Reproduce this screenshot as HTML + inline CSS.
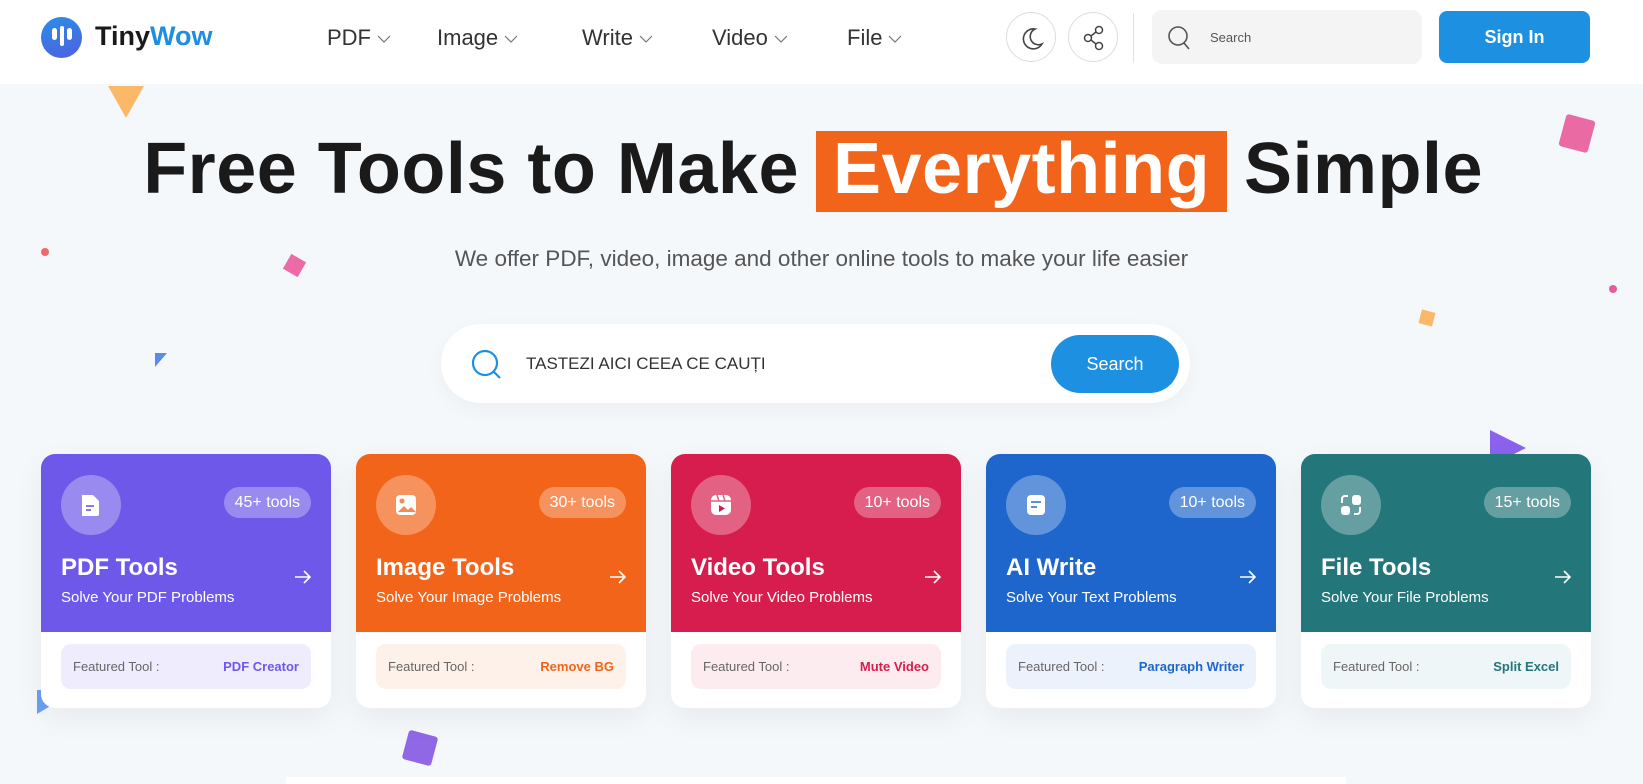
<!DOCTYPE html>
<html><head><meta charset="utf-8"><style>
*{margin:0;padding:0;box-sizing:border-box}
body{width:1643px;height:784px;overflow:hidden;font-family:"Liberation Sans",sans-serif;background:#f5f8fb;position:relative;color:#1a1a1a}
.nav{position:absolute;left:0;top:0;width:1643px;height:84px;background:#fff}
.abs{position:absolute}
.navi{position:absolute;top:25px;font-size:22px;color:#333}
.navi svg{margin-left:6px;vertical-align:middle}
.circ{position:absolute;top:12px;width:50px;height:50px;border:1px solid #ddd;border-radius:50%;background:#fff}
.card{position:absolute;top:454px;width:290px;height:254px;border-radius:14px;background:#fff;overflow:hidden;box-shadow:0 10px 30px rgba(0,0,0,.06)}
.top{height:178px;position:relative;color:#fff}
.ic{position:absolute;left:20px;top:21px;width:60px;height:60px;border-radius:50%;background:rgba(255,255,255,.3)}
.badge{position:absolute;right:20px;top:33px;height:31px;padding:0 11px;border-radius:16px;background:rgba(255,255,255,.3);font-size:16px;line-height:31px}
.tt{position:absolute;left:20px;top:100px;font-size:24px;font-weight:bold}
.st{position:absolute;left:20px;top:135px;font-size:15px}
.ar{position:absolute;right:20px;top:116px}
.feat{position:absolute;left:20px;top:190px;width:250px;height:45px;border-radius:10px;font-size:13px;color:#666;line-height:45px;padding:0 12px}
.feat b{float:right}
.h{position:absolute;top:126px;font-size:72px;font-weight:bold;letter-spacing:0.5px;white-space:nowrap;line-height:86px}
</style></head><body>
<div class="nav">
 <div class="abs" style="left:41px;top:17px;width:41px;height:41px;border-radius:50%;background:linear-gradient(160deg,#2b8ee8,#4f5fe0)"></div>
 <div class="abs" style="left:52px;top:28px;width:5px;height:12px;background:#fff;border-radius:3px"></div>
 <div class="abs" style="left:60px;top:26px;width:4px;height:20px;background:#fff;border-radius:2px"></div>
 <div class="abs" style="left:67px;top:28px;width:5px;height:12px;background:#fff;border-radius:3px"></div>
 <div class="abs" style="left:95px;top:21px;font-size:27px;font-weight:bold">Tiny<span style="color:#1e8ee0">Wow</span></div>
 <div class="navi" style="left:327px">PDF<svg width="14" height="8"><path d="M1 1l6 6 6-6" fill="none" stroke="#777" stroke-width="1.2"/></svg></div>
 <div class="navi" style="left:437px">Image<svg width="14" height="8"><path d="M1 1l6 6 6-6" fill="none" stroke="#777" stroke-width="1.2"/></svg></div>
 <div class="navi" style="left:582px">Write<svg width="14" height="8"><path d="M1 1l6 6 6-6" fill="none" stroke="#777" stroke-width="1.2"/></svg></div>
 <div class="navi" style="left:712px">Video<svg width="14" height="8"><path d="M1 1l6 6 6-6" fill="none" stroke="#777" stroke-width="1.2"/></svg></div>
 <div class="navi" style="left:847px">File<svg width="14" height="8"><path d="M1 1l6 6 6-6" fill="none" stroke="#777" stroke-width="1.2"/></svg></div>
 <div class="circ" style="left:1006px"><svg width="50" height="50"><path d="M28 16a10 10 0 1 0 7 15a8 8 0 0 1-7-15z" fill="none" stroke="#444" stroke-width="1.6"/></svg></div>
 <div class="circ" style="left:1068px"><svg width="50" height="50"><circle cx="30" cy="17" r="3.5" fill="none" stroke="#444" stroke-width="1.5"/><circle cx="19" cy="25" r="3.5" fill="none" stroke="#444" stroke-width="1.5"/><circle cx="30" cy="33" r="3.5" fill="none" stroke="#444" stroke-width="1.5"/><path d="M22 23l5-4M22 27l5 4" stroke="#444" stroke-width="1.5"/></svg></div>
 <div class="abs" style="left:1133px;top:13px;width:1px;height:50px;background:#e2e2e2"></div>
 <div class="abs" style="left:1152px;top:10px;width:270px;height:54px;border-radius:10px;background:#f4f4f4"></div>
 <svg class="abs" style="left:1166px;top:24px" width="28" height="28"><circle cx="12" cy="12" r="9" fill="none" stroke="#555" stroke-width="1.6"/><path d="M18 19l5 6" stroke="#555" stroke-width="1.6"/></svg>
 <div class="abs" style="left:1210px;top:30px;font-size:13px;color:#555">Search</div>
 <div class="abs" style="left:1439px;top:11px;width:151px;height:52px;border-radius:8px;background:#1e90e2;color:#fff;font-size:18px;font-weight:bold;text-align:center;line-height:52px">Sign In</div>
</div>
<div class="abs" style="left:108px;top:86px;width:0;height:0;border-left:18px solid transparent;border-right:18px solid transparent;border-top:32px solid #fbb868"></div>
<div class="abs" style="left:1562px;top:117px;width:30px;height:33px;background:#ea6aa4;transform:rotate(15deg);border-radius:3px"></div>
<div class="abs" style="left:41px;top:248px;width:8px;height:8px;border-radius:50%;background:#f06a6a"></div>
<div class="abs" style="left:286px;top:257px;width:17px;height:17px;background:#ec6aa5;transform:rotate(30deg)"></div>
<div class="abs" style="left:1420px;top:311px;width:14px;height:14px;background:#fbb868;transform:rotate(15deg)"></div>
<div class="abs" style="left:1609px;top:285px;width:8px;height:8px;border-radius:50%;background:#e85aa0"></div>
<div class="abs" style="left:155px;top:353px;width:0;height:0;border-left:12px solid #5b8bea;border-bottom:14px solid transparent"></div>
<div class="abs" style="left:1490px;top:430px;width:0;height:0;border-left:36px solid #8a62ee;border-top:18px solid transparent;border-bottom:18px solid transparent"></div>
<div class="abs" style="left:37px;top:690px;width:0;height:0;border-top:24px solid #6aa0f4;border-right:40px solid transparent"></div>
<div class="abs" style="left:405px;top:733px;width:30px;height:30px;background:#9068e6;transform:rotate(15deg);border-radius:3px"></div>
<div class="abs" style="left:816px;top:131px;width:411px;height:81px;background:#f26419"></div>
<div class="h" style="right:844px">Free Tools to Make</div>
<div class="h" style="left:816px;width:411px;text-align:center;color:#fff">Everything</div>
<div class="h" style="left:1244px">Simple</div>
<div class="abs" style="left:0;top:246px;width:1643px;text-align:center;font-size:22.5px;color:#555">We offer PDF, video, image and other online tools to make your life easier</div>
<div class="abs" style="left:441px;top:324px;width:749px;height:79px;border-radius:40px;background:#fff;box-shadow:0 6px 20px rgba(0,0,0,.04)"></div>
<svg class="abs" style="left:470px;top:348px" width="34" height="34"><circle cx="15" cy="15" r="12" fill="none" stroke="#1e90e2" stroke-width="2.2"/><path d="M24 24l6 6" stroke="#1e90e2" stroke-width="2.2"/></svg>
<div class="abs" style="left:526px;top:354px;font-size:17px;color:#333">TASTEZI AICI CEEA CE CAUȚI</div>
<div class="abs" style="left:1051px;top:335px;width:128px;height:58px;border-radius:29px;background:#1e90e2;color:#fff;font-size:18px;text-align:center;line-height:58px">Search</div>

<div class="card" style="left:41px"><div class="top" style="background:#6e58e9"><div class="ic"></div><svg class="abs" style="left:38px;top:39px" width="24" height="24"><path d="M3 2h11l6 6v13a2 2 0 0 1-2 2H3z" fill="#fff"/><path d="M7 13h8M7 17h5" stroke="#8a76ee" stroke-width="2"/></svg><div class="badge">45+ tools</div><div class="tt">PDF Tools</div><div class="st">Solve Your PDF Problems</div><svg class="ar" width="16" height="14"><path d="M0 7h15M9 1l6 6-6 6" fill="none" stroke="#fff" stroke-width="1.6"/></svg></div><div class="feat" style="background:#efecfd">Featured Tool :<b style="color:#6e58e9">PDF Creator</b></div></div>
<div class="card" style="left:356px"><div class="top" style="background:#f26419"><div class="ic"></div><svg class="abs" style="left:38px;top:39px" width="24" height="24"><rect x="2" y="2" width="20" height="20" rx="4" fill="#fff"/><circle cx="8" cy="8" r="2.5" fill="#f58a50"/><path d="M4 19l6-6 4 4 3-3 5 5z" fill="#f58a50"/></svg><div class="badge">30+ tools</div><div class="tt">Image Tools</div><div class="st">Solve Your Image Problems</div><svg class="ar" width="16" height="14"><path d="M0 7h15M9 1l6 6-6 6" fill="none" stroke="#fff" stroke-width="1.6"/></svg></div><div class="feat" style="background:#fef1ea">Featured Tool :<b style="color:#f26419">Remove BG</b></div></div>
<div class="card" style="left:671px"><div class="top" style="background:#d71d4d"><div class="ic"></div><svg class="abs" style="left:38px;top:39px" width="24" height="24"><rect x="2" y="2" width="20" height="20" rx="5" fill="#fff"/><path d="M2 8h20M8 2l2 6M14 2l2 6" stroke="#e0607f" stroke-width="1.5"/><path d="M10 12v7l6-3.5z" fill="#d71d4d"/></svg><div class="badge">10+ tools</div><div class="tt">Video Tools</div><div class="st">Solve Your Video Problems</div><svg class="ar" width="16" height="14"><path d="M0 7h15M9 1l6 6-6 6" fill="none" stroke="#fff" stroke-width="1.6"/></svg></div><div class="feat" style="background:#fcebef">Featured Tool :<b style="color:#d71d4d">Mute Video</b></div></div>
<div class="card" style="left:986px"><div class="top" style="background:#1e66cc"><div class="ic"></div><svg class="abs" style="left:38px;top:39px" width="24" height="24"><rect x="3" y="2" width="18" height="20" rx="4" fill="#fff"/><path d="M7 9h10M7 14h6" stroke="#5a8ede" stroke-width="2"/></svg><div class="badge">10+ tools</div><div class="tt">AI Write</div><div class="st">Solve Your Text Problems</div><svg class="ar" width="16" height="14"><path d="M0 7h15M9 1l6 6-6 6" fill="none" stroke="#fff" stroke-width="1.6"/></svg></div><div class="feat" style="background:#ebf2fc">Featured Tool :<b style="color:#1e66cc">Paragraph Writer</b></div></div>
<div class="card" style="left:1301px"><div class="top" style="background:#23767a"><div class="ic"></div><svg class="abs" style="left:38px;top:39px" width="24" height="24"><rect x="13" y="2" width="9" height="10" rx="3" fill="#fff"/><rect x="2" y="13" width="9" height="9" rx="3" fill="#fff"/><path d="M3 10V6a3 3 0 0 1 3-3h3M21 14v4a3 3 0 0 1-3 3h-3" fill="none" stroke="#fff" stroke-width="2"/></svg><div class="badge">15+ tools</div><div class="tt">File Tools</div><div class="st">Solve Your File Problems</div><svg class="ar" width="16" height="14"><path d="M0 7h15M9 1l6 6-6 6" fill="none" stroke="#fff" stroke-width="1.6"/></svg></div><div class="feat" style="background:#eef6f7">Featured Tool :<b style="color:#23767a">Split Excel</b></div></div>
<div class="abs" style="left:286px;top:777px;width:1060px;height:7px;background:#fff"></div>
</body></html>
